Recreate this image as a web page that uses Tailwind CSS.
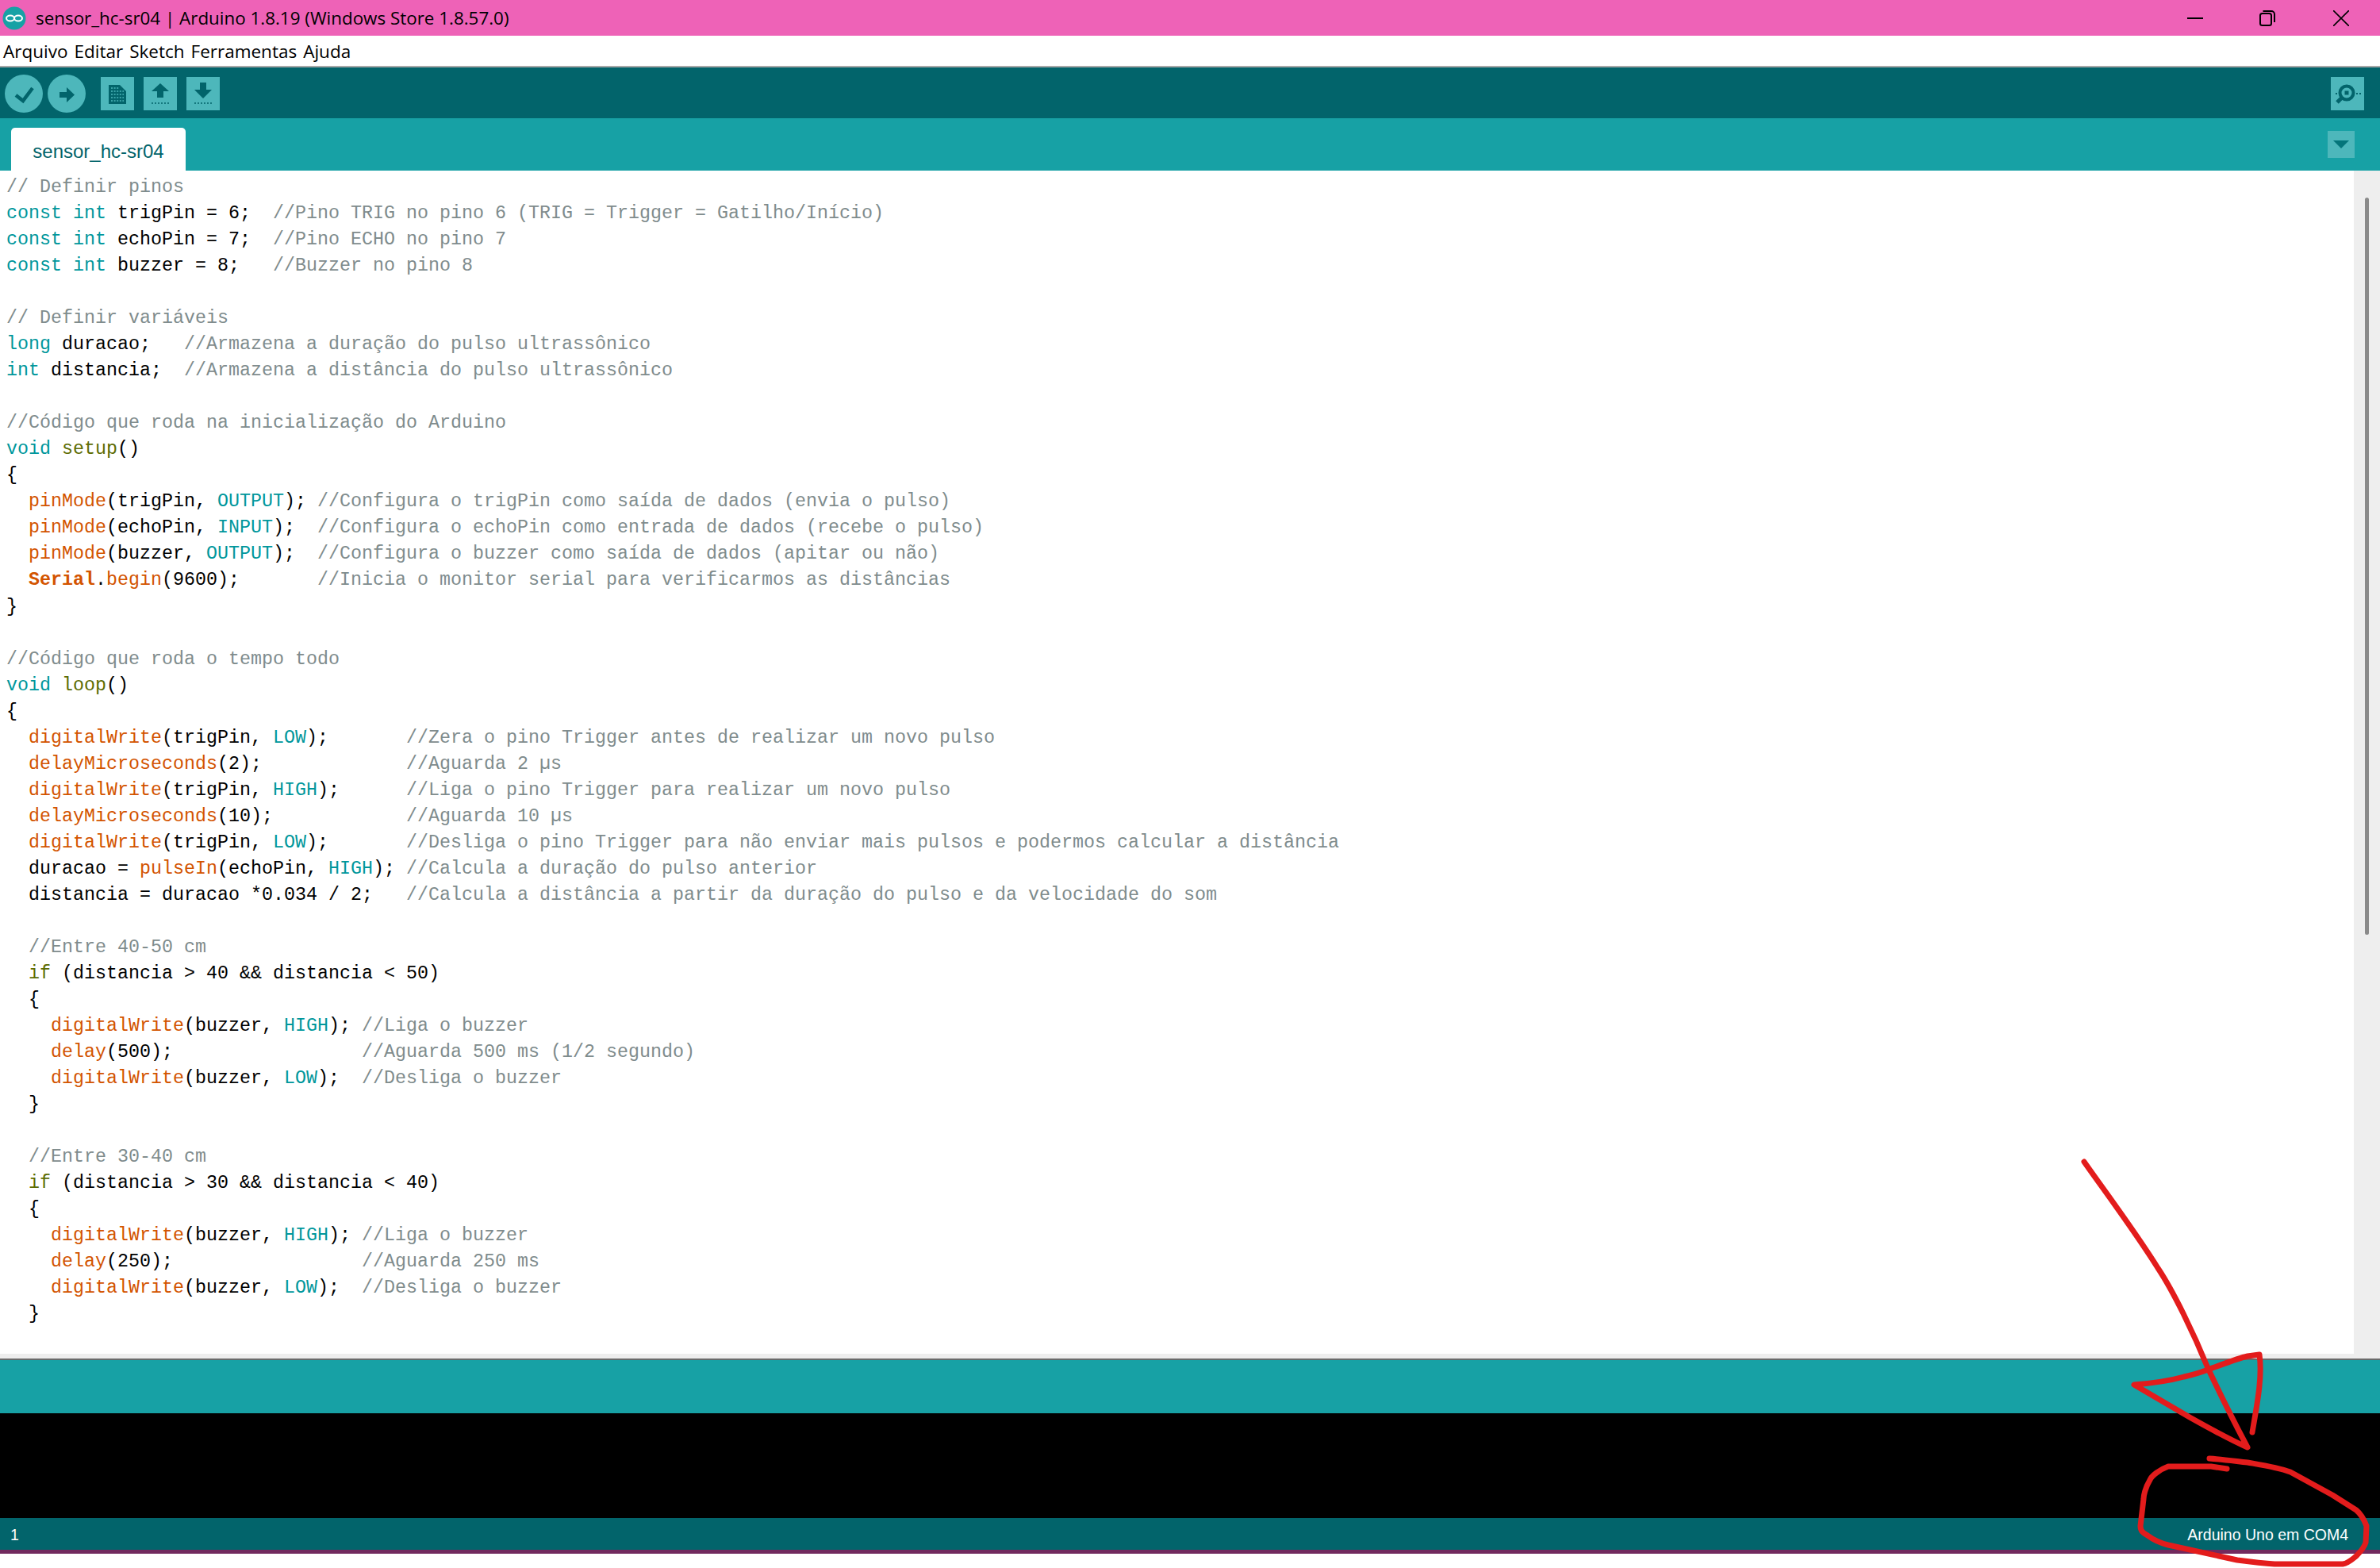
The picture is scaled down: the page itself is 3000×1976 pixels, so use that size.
<!DOCTYPE html>
<html lang="pt">
<head>
    <meta charset="UTF-8">
    <title>sensor_hc-sr04 | Arduino 1.8.19</title>
    <script src="https://cdn.jsdelivr.net/npm/@tailwindcss/browser@4"></script>
</head>
<body class="bg-white">
<div class="relative w-[3000px] h-[1976px] overflow-hidden flex flex-col">
    <!-- Barra de titulo -->
    <div class="h-[45px] bg-[#ee62b7] flex items-center shrink-0 font-['Open_Sans',sans-serif]">
        <svg class="ml-[3px] w-[30px] h-[30px]" viewBox="0 0 30 30">
            <circle cx="15" cy="15" r="14.5" fill="#17a1a5"/>
            <ellipse cx="10" cy="15" rx="5" ry="3.5" fill="none" stroke="#fff" stroke-width="2"/>
            <ellipse cx="20" cy="15" rx="5" ry="3.5" fill="none" stroke="#fff" stroke-width="2"/>
        </svg>
        <span class="ml-[12px] text-[22.4px] text-black">sensor_hc-sr04 | Arduino 1.8.19 (Windows Store 1.8.57.0)</span>
        <div class="ml-auto flex items-center">
            <svg class="w-[20px] h-[20px] mr-[71px]" viewBox="0 0 20 20"><path d="M0 10h20" stroke="#000" stroke-width="2"/></svg>
            <svg class="w-[20px] h-[20px] mr-[73px]" viewBox="0 0 20 20" fill="none" stroke="#000" stroke-width="2"><rect x="1" y="4" width="14" height="15" rx="2.5"/><path d="M4.5 1H15a4 4 0 0 1 4 4v10"/></svg>
            <svg class="w-[20px] h-[20px] mr-[39px]" viewBox="0 0 20 20" stroke="#000" stroke-width="1.6"><path d="M0 0l20 20M20 0L0 20"/></svg>
        </div>
    </div>

    <!-- Menu -->
    <div class="h-[40px] shrink-0 bg-white border-b-2 border-[#a8a8a8] flex items-center pt-[2px] pl-[4px] gap-[8px] text-[22.5px] text-black font-['Open_Sans',sans-serif]">
        <span>Arquivo</span><span>Editar</span><span>Sketch</span><span>Ferramentas</span><span>Ajuda</span>
    </div>

    <!-- Toolbar -->
    <div class="h-[64px] shrink-0 bg-[#02646b] flex items-center pt-[2px] pl-[6px] pr-[20px]">
        <svg class="w-[48px] h-[48px]" viewBox="0 0 48 48"><circle cx="24" cy="24" r="24" fill="#4db7bb"/><path d="M14 26l9 7 12-16" fill="none" stroke="#02646b" stroke-width="4.5"/></svg>
        <svg class="w-[48px] h-[48px] ml-[6px]" viewBox="0 0 48 48"><circle cx="24" cy="24" r="24" fill="#4db7bb"/><path d="M15 22h9v-6l10 9.5-10 9.5v-6h-9z" fill="#02646b"/></svg>
        <svg class="w-[42px] h-[42px] ml-[19px]" viewBox="0 0 42 42"><rect width="42" height="42" fill="#4db7bb"/><path d="M10 10h14l8 8v16H10z" fill="#02646b"/><path d="M13 14h10M13 18h16M13 22h16M13 26h16M13 30h16" stroke="#4db7bb" stroke-width="1.6" stroke-dasharray="2 1.6"/></svg>
        <svg class="w-[42px] h-[42px] ml-[12px]" viewBox="0 0 42 42"><rect width="42" height="42" fill="#4db7bb"/><path d="M21 8l11 10h-7v8h-8v-8h-7z" fill="#02646b"/><path d="M10 33h22" stroke="#02646b" stroke-width="1.6" stroke-dasharray="2 2"/></svg>
        <svg class="w-[42px] h-[42px] ml-[12px]" viewBox="0 0 42 42"><rect width="42" height="42" fill="#4db7bb"/><path d="M17 7h8v9h7L21 27 10 16h7z" fill="#02646b"/><path d="M10 33h22" stroke="#02646b" stroke-width="1.6" stroke-dasharray="2 2"/></svg>
        <svg class="w-[42px] h-[42px] ml-auto" viewBox="0 0 42 42"><rect width="42" height="42" fill="#4db7bb"/><circle cx="20" cy="20" r="8.5" fill="none" stroke="#02646b" stroke-width="4"/><rect x="17.5" y="17.5" width="5" height="5" fill="#02646b"/><path d="M14 26l-6 6" stroke="#02646b" stroke-width="5"/><path d="M6 21h2M32 21h6" stroke="#02646b" stroke-width="2" stroke-dasharray="2 2"/></svg>
    </div>

    <!-- Abas -->
    <div class="h-[66px] shrink-0 bg-[#17a1a5] flex items-end pl-[14px] pr-[32px] relative">
        <div class="w-[220px] h-[54px] bg-white rounded-t-[5px] flex items-center justify-center pt-[5px] text-[24px] text-[#02646b] font-['Liberation_Sans',sans-serif]">sensor_hc-sr04</div>
        <div class="ml-auto self-start mt-[16px] w-[34px] h-[34px] bg-[#4db7bb] flex items-center justify-center">
            <svg class="w-[20px] h-[10px]" viewBox="0 0 20 10"><path d="M0 0h20L10 10z" fill="#04757a"/></svg>
        </div>
    </div>

    <!-- Editor -->
    <div class="h-[1491px] shrink-0 flex bg-white">
        <pre class="flex-1 overflow-hidden pl-[8px] pt-[5px] text-[23.33px] leading-[33.03px] text-black font-['Liberation_Mono',monospace]"><span class="text-[#7f8c8d]">// Definir pinos</span>
<span class="text-[#00979c]">const int</span> trigPin = 6;  <span class="text-[#7f8c8d]">//Pino TRIG no pino 6 (TRIG = Trigger = Gatilho/Início)</span>
<span class="text-[#00979c]">const int</span> echoPin = 7;  <span class="text-[#7f8c8d]">//Pino ECHO no pino 7</span>
<span class="text-[#00979c]">const int</span> buzzer = 8;   <span class="text-[#7f8c8d]">//Buzzer no pino 8</span>

<span class="text-[#7f8c8d]">// Definir variáveis</span>
<span class="text-[#00979c]">long</span> duracao;   <span class="text-[#7f8c8d]">//Armazena a duração do pulso ultrassônico</span>
<span class="text-[#00979c]">int</span> distancia;  <span class="text-[#7f8c8d]">//Armazena a distância do pulso ultrassônico</span>

<span class="text-[#7f8c8d]">//Código que roda na inicialização do Arduino</span>
<span class="text-[#00979c]">void</span> <span class="text-[#5e6d03]">setup</span>()
{
  <span class="text-[#d35400]">pinMode</span>(trigPin, <span class="text-[#00979c]">OUTPUT</span>); <span class="text-[#7f8c8d]">//Configura o trigPin como saída de dados (envia o pulso)</span>
  <span class="text-[#d35400]">pinMode</span>(echoPin, <span class="text-[#00979c]">INPUT</span>);  <span class="text-[#7f8c8d]">//Configura o echoPin como entrada de dados (recebe o pulso)</span>
  <span class="text-[#d35400]">pinMode</span>(buzzer, <span class="text-[#00979c]">OUTPUT</span>);  <span class="text-[#7f8c8d]">//Configura o buzzer como saída de dados (apitar ou não)</span>
  <span class="text-[#d35400] font-bold">Serial</span>.<span class="text-[#d35400]">begin</span>(9600);       <span class="text-[#7f8c8d]">//Inicia o monitor serial para verificarmos as distâncias</span>
}

<span class="text-[#7f8c8d]">//Código que roda o tempo todo</span>
<span class="text-[#00979c]">void</span> <span class="text-[#5e6d03]">loop</span>()
{
  <span class="text-[#d35400]">digitalWrite</span>(trigPin, <span class="text-[#00979c]">LOW</span>);       <span class="text-[#7f8c8d]">//Zera o pino Trigger antes de realizar um novo pulso</span>
  <span class="text-[#d35400]">delayMicroseconds</span>(2);             <span class="text-[#7f8c8d]">//Aguarda 2 µs</span>
  <span class="text-[#d35400]">digitalWrite</span>(trigPin, <span class="text-[#00979c]">HIGH</span>);      <span class="text-[#7f8c8d]">//Liga o pino Trigger para realizar um novo pulso</span>
  <span class="text-[#d35400]">delayMicroseconds</span>(10);            <span class="text-[#7f8c8d]">//Aguarda 10 µs</span>
  <span class="text-[#d35400]">digitalWrite</span>(trigPin, <span class="text-[#00979c]">LOW</span>);       <span class="text-[#7f8c8d]">//Desliga o pino Trigger para não enviar mais pulsos e podermos calcular a distância</span>
  duracao = <span class="text-[#d35400]">pulseIn</span>(echoPin, <span class="text-[#00979c]">HIGH</span>); <span class="text-[#7f8c8d]">//Calcula a duração do pulso anterior</span>
  distancia = duracao *0.034 / 2;   <span class="text-[#7f8c8d]">//Calcula a distância a partir da duração do pulso e da velocidade do som</span>

  <span class="text-[#7f8c8d]">//Entre 40-50 cm</span>
  <span class="text-[#5e6d03]">if</span> (distancia &gt; 40 &amp;&amp; distancia &lt; 50)
  {
    <span class="text-[#d35400]">digitalWrite</span>(buzzer, <span class="text-[#00979c]">HIGH</span>); <span class="text-[#7f8c8d]">//Liga o buzzer</span>
    <span class="text-[#d35400]">delay</span>(500);                 <span class="text-[#7f8c8d]">//Aguarda 500 ms (1/2 segundo)</span>
    <span class="text-[#d35400]">digitalWrite</span>(buzzer, <span class="text-[#00979c]">LOW</span>);  <span class="text-[#7f8c8d]">//Desliga o buzzer</span>
  }

  <span class="text-[#7f8c8d]">//Entre 30-40 cm</span>
  <span class="text-[#5e6d03]">if</span> (distancia &gt; 30 &amp;&amp; distancia &lt; 40)
  {
    <span class="text-[#d35400]">digitalWrite</span>(buzzer, <span class="text-[#00979c]">HIGH</span>); <span class="text-[#7f8c8d]">//Liga o buzzer</span>
    <span class="text-[#d35400]">delay</span>(250);                 <span class="text-[#7f8c8d]">//Aguarda 250 ms</span>
    <span class="text-[#d35400]">digitalWrite</span>(buzzer, <span class="text-[#00979c]">LOW</span>);  <span class="text-[#7f8c8d]">//Desliga o buzzer</span>
  }</pre>
        <!-- Barra de rolagem -->
        <div class="w-[33px] bg-[#eeeeee] pt-[34px] pl-[14px]">
            <div class="w-[5px] h-[929px] bg-[#8a8a8a] rounded-full"></div>
        </div>
    </div>

    <!-- Faixa horizontal e console -->
    <div class="h-[8px] shrink-0 bg-[#eeeeee] border-b-2 border-[#6b6b6b]"></div>
    <div class="h-[67px] shrink-0 bg-[#17a1a5]"></div>
    <div class="h-[132px] shrink-0 bg-black"></div>
    <div class="h-[40px] shrink-0 bg-[#02646b] flex items-center justify-between pt-[4px] pl-[13px] pr-[40px] text-[19.5px] text-white font-['Liberation_Sans',sans-serif]">
        <span>1</span><span>Arduino Uno em COM4</span>
    </div>
    <div class="h-[5px] shrink-0 bg-[#722a5e]"></div>

    <!-- Anotacao em vermelho sobre a captura -->
    <svg class="absolute inset-0 w-[3000px] h-[1976px] pointer-events-none" viewBox="0 0 3000 1976" fill="none" stroke="#e31c1c" stroke-width="7" stroke-linecap="round" stroke-linejoin="round">
        <path d="M2627 1464C2650 1497 2690 1550 2720 1598C2740 1628 2765 1680 2783 1724C2800 1760 2815 1790 2833 1824C2810 1814 2785 1800 2760 1786L2690 1745C2715 1743 2735 1740 2753 1735C2770 1731 2775 1729 2783 1726C2800 1720 2820 1712 2833 1709L2848 1707C2852 1735 2845 1770 2839 1805"/>
        <path d="M2807 1851L2787 1848H2733C2722 1852 2712 1860 2710 1865C2704 1875 2702 1885 2702 1889L2698 1923C2698 1930 2702 1932 2707 1935C2715 1941 2725 1945 2733 1947L2820 1966C2835 1968 2850 1970 2867 1971H2953C2960 1970 2965 1965 2970 1961C2976 1955 2980 1950 2982 1944L2983 1923C2980 1915 2976 1908 2970 1903L2940 1884L2887 1855C2870 1849 2850 1846 2833 1843C2815 1841 2800 1839 2785 1838"/>
    </svg>
</div>
</body>
</html>
